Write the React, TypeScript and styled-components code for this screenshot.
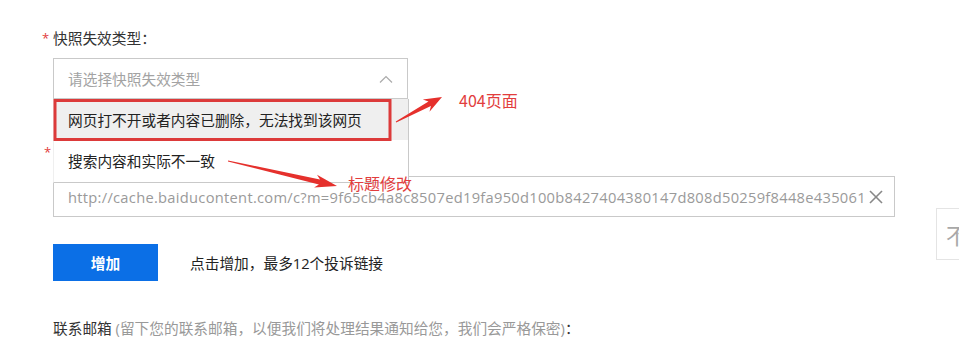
import React from "react";
import styled, { createGlobalStyle } from "styled-components";

const GlobalStyle = createGlobalStyle`
  html, body { margin: 0; padding: 0; background: #fff; }
  body { font-family: "Open Sans", "Noto Sans CJK SC", sans-serif; color: #333; }
  * { box-sizing: border-box; }
`;

const Page = styled.div`
  position: relative;
  width: 959px;
  height: 345px;
  overflow: hidden;
  background: #fff;
`;

const Form = styled.div`
  display: flex;
  flex-direction: column;
  padding: 28px 0 0 42px;
`;

const Field = styled.div<{ $gap: number; $mb: number }>`
  display: flex;
  flex-direction: column;
  gap: ${(p) => p.$gap}px;
  margin-bottom: ${(p) => p.$mb}px;
`;

const Label = styled.div`
  display: flex;
  align-items: center;
  height: 20px;
  font-size: 14.7px;
  line-height: 20px;
  color: #333;
  white-space: nowrap;
`;

const Star = styled.span<{ $shift?: number }>`
  width: 11px;
  color: #e23b3b;
  font-size: 13px;
  padding-left: ${(p) => p.$shift ?? 0}px;
`;

const Covered = styled.span`
  visibility: hidden;
`;

const Muted = styled.span`
  color: #999;
`;

const Control = styled.div`
  margin-left: 11px;
`;

const SelectBox = styled.div`
  position: relative;
  width: 355px;
  height: 41px;
  border: 1px solid #c9c9c9;
  display: flex;
  align-items: center;
  justify-content: space-between;
  padding: 0 14px;
  font-size: 14.7px;
  color: #a3a3a3;
  background: #fff;
`;

const Menu = styled.div`
  position: absolute;
  top: 40px;
  left: -1px;
  width: 356px;
  height: 84px;
  background: #fff;
  border: 1px solid #c9c9c9;
  border-left-color: #efefef;
  border-top: none;
  display: flex;
  flex-direction: column;
  z-index: 2;
`;

const Option = styled.div<{ $active?: boolean }>`
  height: 41px;
  display: flex;
  align-items: center;
  padding-left: 14px;
  font-size: 14.7px;
  color: #222;
  background: ${(p) => (p.$active ? "#efefef" : "#fff")};
  white-space: nowrap;
`;

const InputBox = styled.div`
  width: 842px;
  height: 41px;
  border: 1px solid #c9c9c9;
  display: flex;
  align-items: center;
  padding: 0 11px 0 14px;
  gap: 6px;
  font-size: 14.7px;
  color: #9a9a9a;
`;

const InputText = styled.span`
  flex: 1;
  overflow: hidden;
  white-space: nowrap;
  letter-spacing: 0.28px;
`;

const ButtonRow = styled.div`
  display: flex;
  align-items: center;
  gap: 32px;
  margin-left: 11px;
  margin-bottom: 37px;
`;

const AddButton = styled.button`
  width: 105px;
  height: 37px;
  border: none;
  background: #0b6fe6;
  color: #fff;
  font-family: "Noto Sans CJK SC", sans-serif;
  font-size: 14.7px;
  font-weight: 700;
  padding: 0;
`;

const Hint = styled.span`
  font-size: 14.7px;
  color: #222;
`;

const ContactLabel = styled(Label)`
  margin-left: 11px;
  color: #333;
`;

const Annotations = styled.svg`
  position: absolute;
  left: 0;
  top: 0;
  width: 959px;
  height: 345px;
  pointer-events: none;
  z-index: 5;
`;

const AnnoText = styled.span<{ $x: number; $y: number }>`
  position: absolute;
  left: ${(p) => p.$x}px;
  top: ${(p) => p.$y}px;
  font-family: "Noto Sans CJK SC", sans-serif;
  font-size: 16px;
  line-height: 16px;
  color: #e23d3d;
  white-space: nowrap;
  z-index: 6;
`;

const FloatTool = styled.div`
  position: absolute;
  left: 936px;
  top: 208px;
  width: 60px;
  height: 52px;
  border: 1px solid #e4e4e4;
  background: #fff;
  display: flex;
  align-items: center;
  padding-left: 9px;
  font-family: "Noto Sans CJK SC", sans-serif;
  font-size: 22px;
  color: #a8a8a8;
`;

function arrow(x1: number, y1: number, x2: number, y2: number, headLen: number, headW: number, shaftW: number) {
  const dx = x2 - x1;
  const dy = y2 - y1;
  const len = Math.hypot(dx, dy);
  const ux = dx / len;
  const uy = dy / len;
  const nx = -uy;
  const ny = ux;
  const bx = x2 - ux * headLen;
  const by = y2 - uy * headLen;
  const nb = x2 - ux * (headLen - 4);
  const nby = y2 - uy * (headLen - 4);
  const pts = [
    [x1 + nx * 0.5, y1 + ny * 0.5],
    [nb + nx * (shaftW / 2), nby + ny * (shaftW / 2)],
    [bx + nx * (headW / 2), by + ny * (headW / 2)],
    [x2, y2],
    [bx - nx * (headW / 2), by - ny * (headW / 2)],
    [nb - nx * (shaftW / 2), nby - ny * (shaftW / 2)],
    [x1 - nx * 0.5, y1 - ny * 0.5],
  ];
  return pts.map((p) => `${p[0].toFixed(1)},${p[1].toFixed(1)}`).join(" ");
}

export default function App() {
  return (
    <Page>
      <GlobalStyle />
      <Form>
        <Field $gap={10} $mb={43}>
          <Label>
            <Star>*</Star>快照失效类型：
          </Label>
          <Control>
            <SelectBox>
              <span>请选择快照失效类型</span>
              <svg width="14" height="8" viewBox="0 0 14 8">
                <polyline points="1,7.5 7,1.5 13,7.5" fill="none" stroke="#aaa" strokeWidth="1.2" />
              </svg>
              <Menu>
                <Option $active>网页打不开或者内容已删除，无法找到该网页</Option>
                <Option>搜索内容和实际不一致</Option>
              </Menu>
            </SelectBox>
          </Control>
        </Field>
        <Field $gap={14} $mb={27}>
          <Label>
            <Star $shift={2}>*</Star>
            <Covered>快照链接：</Covered>
          </Label>
          <Control>
            <InputBox>
              <InputText>
                http://cache.baiducontent.com/c?m=9f65cb4a8c8507ed19fa950d100b8427404380147d808d50259f8448e4350610c4d16
              </InputText>
              <svg width="14" height="14" viewBox="0 0 14 14">
                <line x1="1" y1="1" x2="13" y2="13" stroke="#888" strokeWidth="1.6" />
                <line x1="13" y1="1" x2="1" y2="13" stroke="#888" strokeWidth="1.6" />
              </svg>
            </InputBox>
          </Control>
        </Field>
        <ButtonRow>
          <AddButton>增加</AddButton>
          <Hint>点击增加，最多12个投诉链接</Hint>
        </ButtonRow>
        <ContactLabel>
          联系邮箱&nbsp;<Muted>(留下您的联系邮箱，以便我们将处理结果通知给您，我们会严格保密)</Muted>：
        </ContactLabel>
      </Form>

      <FloatTool>不</FloatTool>

      <Annotations viewBox="0 0 959 345">
        <rect x="55" y="100.5" width="335" height="39" fill="none" stroke="#dc3a3a" strokeWidth="3" />
        <polygon points={arrow(396, 122, 442, 97, 18, 14, 5)} fill="#e5302c" />
        <polygon points={arrow(228, 161, 337, 186, 22, 13, 5)} fill="#e5302c" />
      </Annotations>
      <AnnoText $x={459} $y={92}>404页面</AnnoText>
      <AnnoText $x={348} $y={175}>标题修改</AnnoText>
    </Page>
  );
}
